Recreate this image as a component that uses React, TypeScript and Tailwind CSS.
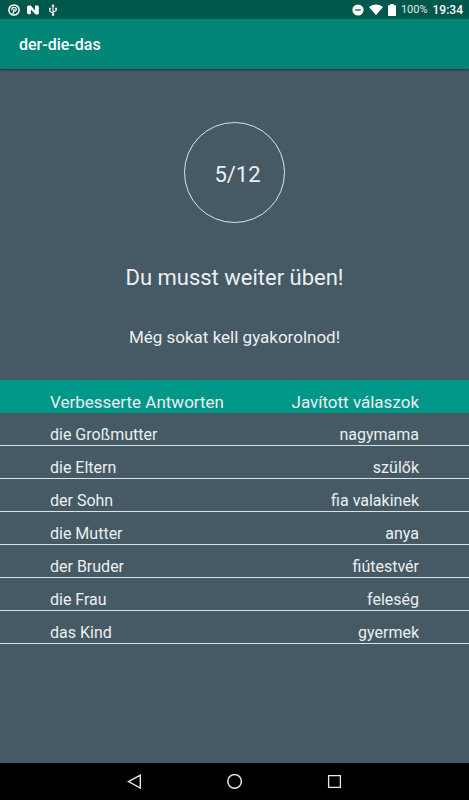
const answers = [
  { german: 'die Großmutter', hungarian: 'nagymama' },
  { german: 'die Eltern',     hungarian: 'szülők' },
  { german: 'der Sohn',       hungarian: 'fia valakinek' },
  { german: 'die Mutter',     hungarian: 'anya' },
  { german: 'der Bruder',     hungarian: 'fiútestvér' },
  { german: 'die Frau',       hungarian: 'feleség' },
  { german: 'das Kind',       hungarian: 'gyermek' },
]

export default function App() {
  return (
    <div className="flex flex-col min-h-screen bg-[#455a64] text-[#eceff1] font-['Roboto',sans-serif]">
      <StatusBar />

      <header className="relative flex items-center h-[50px] px-[19px] pt-px bg-[#008577] shadow-[0_1px_2px_rgba(0,0,0,0.45)]">
        <h1 className="text-base font-medium text-white">der-die-das</h1>
      </header>

      <main className="flex-1 flex flex-col pt-[53px]">
        <div className="self-center flex items-center justify-center size-[101px] rounded-full border border-[#dfe3e5] pl-1.5 pt-1 text-[22px]">
          5/12
        </div>
        <p className="mt-[41px] text-center text-[22px] leading-7">Du musst weiter üben!</p>
        <p className="mt-8 pt-px text-center text-[17px] leading-6">Még sokat kell gyakorolnod!</p>
        <AnswerTable />
      </main>

      <NavigationBar />
    </div>
  )
}

function AnswerTable() {
  return (
    <table className="w-full mt-[31px] border-collapse">
      <thead>
        <tr className="h-[33px] bg-[#009688] text-[17px] leading-[22px]">
          <th className="pl-[50px] pt-[11px] pb-0 text-left font-normal" scope="col">Verbesserte Antworten</th>
          <th className="pr-[50px] pt-[11px] pb-0 text-right font-normal" scope="col">Javított válaszok</th>
        </tr>
      </thead>
      <tbody className="text-[16px] leading-[22px]">
        {answers.map(({ german, hungarian }) => (
          <tr key={german} className="h-[33px] shadow-[inset_0_-1px_0_#dce1e3]">
            <td className="pl-[50px] pb-0 pt-[11px]">{german}</td>
            <td className="pr-[50px] pb-0 pt-[11px] text-right">{hungarian}</td>
          </tr>
        ))}
      </tbody>
    </table>
  )
}

function StatusBar() {
  return (
    <div className="flex items-center justify-between h-[19px] pl-2 pr-[6px] bg-[#00574b] text-white">
      <div className="flex items-center gap-[7px]">
        {/* Pinterest */}
        <svg className="size-3" viewBox="0 0 12 12" fill="none" stroke="currentColor">
          <circle cx="6" cy="6" r="5.1" strokeWidth="1.5" />
          <path d="M4 6.3C3.3 4.6 4.3 3.3 6.1 3.3S8.7 5 8.1 6.3C7.6 7.4 6.2 7.3 5.7 6.6M6.1 4.8 4.9 10.2" strokeWidth="1.2" />
        </svg>
        {/* Android N */}
        <svg className="size-3" viewBox="0 0 12 12" fill="currentColor">
          <path d="M0 2.6 1.4 1.6h2.4L8 6.4V1.6h2.8l1 1v7l-.8.8H8.6L3.8 5.4v4.8H1.2L0 9z" />
        </svg>
        {/* USB */}
        <svg className="size-3 ml-px" viewBox="6 0 12 12" fill="none" stroke="currentColor">
          <path d="M12 1.5V10M12 8.9 8.9 7.4V4.5M12 8.2 15.1 6.7V4" strokeWidth="1.1" />
          <path d="M12 0 10.4 2.4h3.2zM8 3.7h1.8v1.8H8zM14.2 3.7H16v1.8h-1.8z" fill="currentColor" stroke="none" />
          <circle cx="12" cy="10.6" r="1.3" fill="currentColor" stroke="none" />
        </svg>
      </div>

      <div className="flex items-center text-[12px] leading-none">
        {/* Do not disturb */}
        <svg className="size-3 mr-1" viewBox="0 0 12 12">
          <circle cx="6" cy="6" r="5.6" fill="currentColor" />
          <path d="M3.3 6h5.4" stroke="#00574b" strokeWidth="1.3" />
        </svg>
        {/* Wi-Fi */}
        <svg className="w-4 h-3 mr-1" viewBox="0 0 16 12" fill="currentColor">
          <path d="M1 3Q8-1.8 15 3L8 11.2z" />
        </svg>
        {/* Battery */}
        <svg className="w-2 h-3 mr-[5px]" viewBox="0 0 8 12" fill="currentColor">
          <path d="M2.3 0h3.4v1.2H8V12H0V1.2h2.3z" />
        </svg>
        <span className="mr-[5px] text-[11px] text-[#e0ebe9]">100%</span>
        <span className="font-medium">19:34</span>
      </div>
    </div>
  )
}

function NavigationBar() {
  return (
    <nav className="flex items-center justify-center gap-[76px] h-[37px] bg-black text-[#e8e8e8]">
      <button className="flex items-center justify-center size-6" aria-label="Back">
        <svg className="size-4" viewBox="0 0 16 16" fill="none" stroke="currentColor" strokeWidth="1.4">
          <path d="M13.3 1.2v12.8L1.5 7.6z" />
        </svg>
      </button>
      <button className="flex items-center justify-center size-6" aria-label="Home">
        <svg className="size-4" viewBox="0 0 16 16" fill="none" stroke="currentColor" strokeWidth="1.5">
          <circle cx="7.6" cy="7.4" r="6.8" />
        </svg>
      </button>
      <button className="flex items-center justify-center size-6" aria-label="Recent apps">
        <svg className="size-4" viewBox="0 0 16 16" fill="none" stroke="currentColor" strokeWidth="1.3">
          <path d="M1.6 1.6h11.8v11.8H1.6z" />
        </svg>
      </button>
    </nav>
  )
}
